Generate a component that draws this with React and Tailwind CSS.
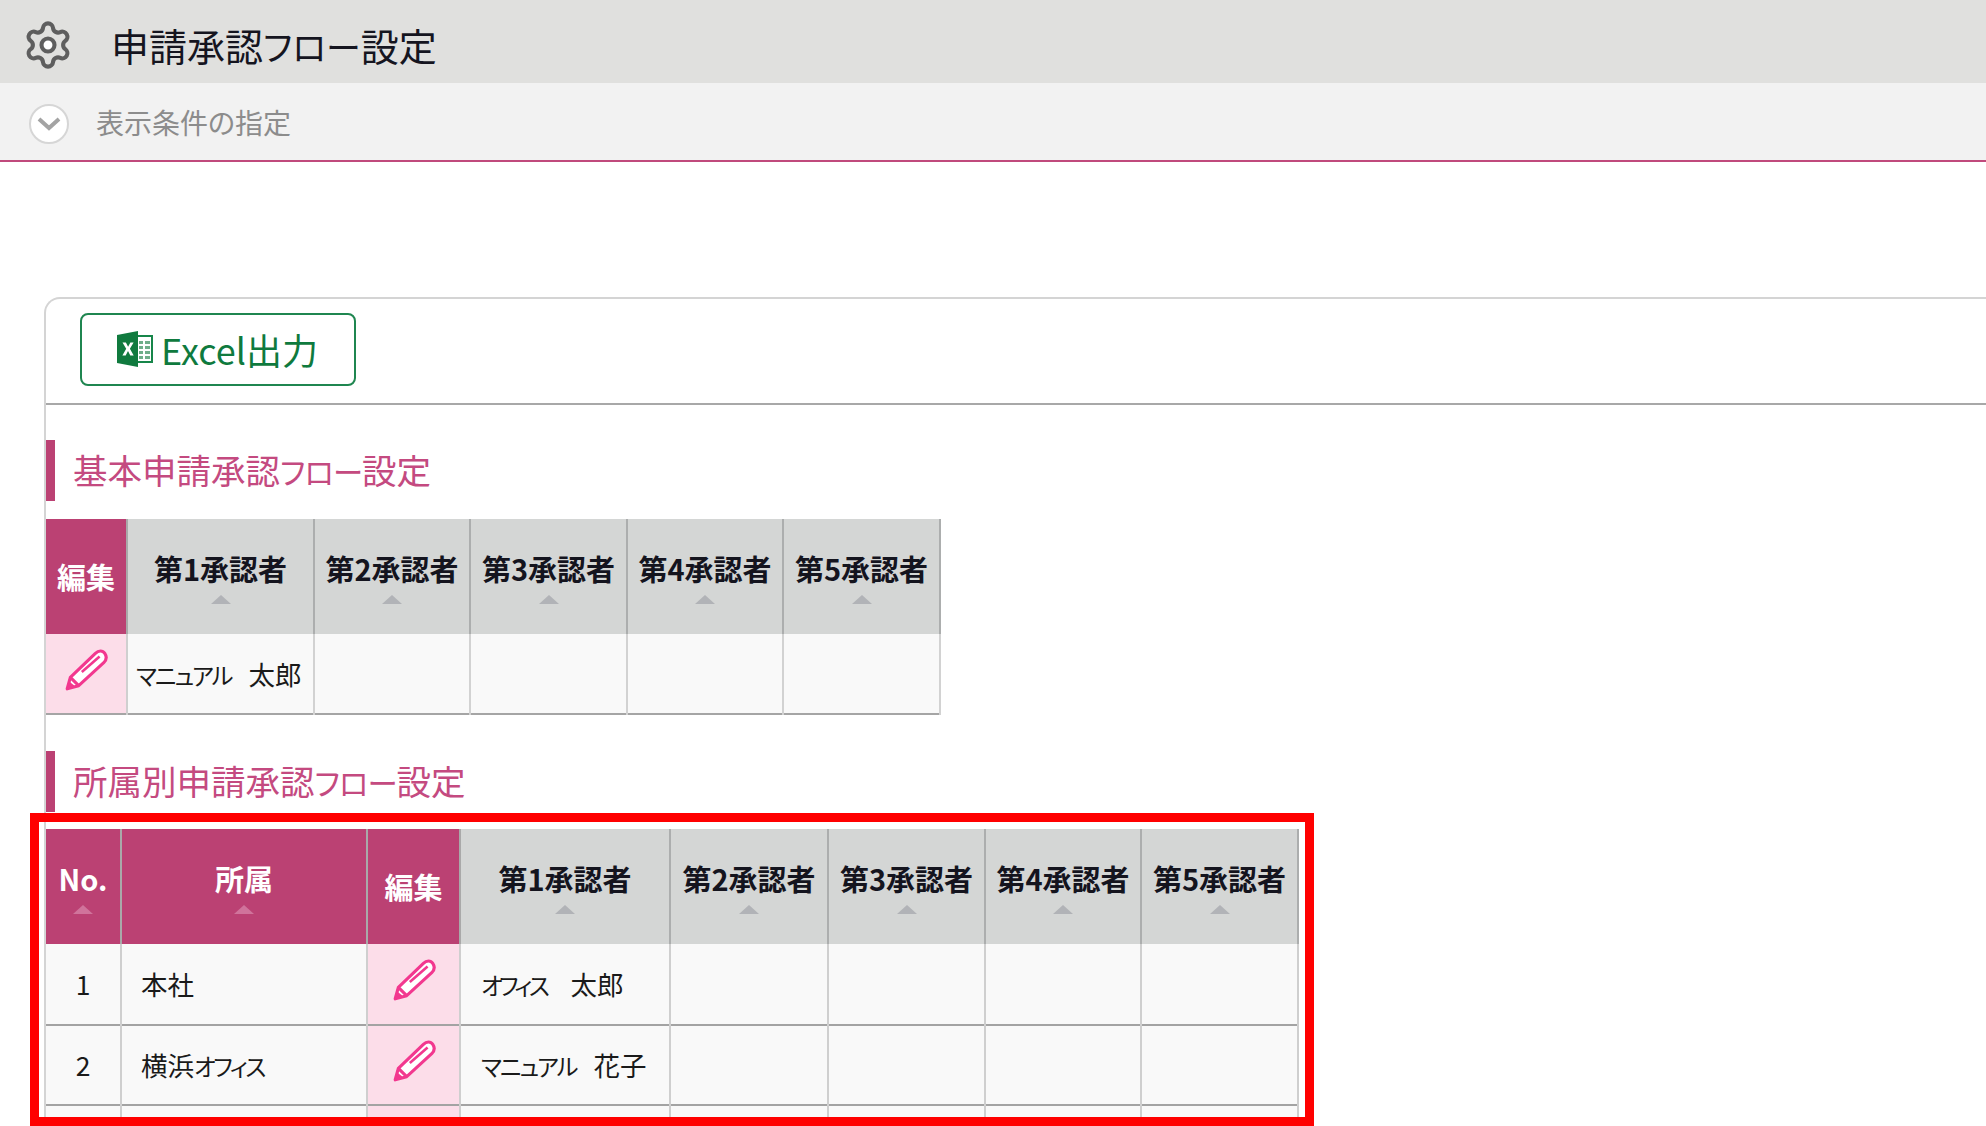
import React from 'react';
import { Settings } from 'lucide-react';

const font = "font-['Noto_Sans_CJK_JP','Liberation_Sans',sans-serif] [font-feature-settings:'palt']";

const approvers = ['第1承認者', '第2承認者', '第3承認者', '第4承認者', '第5承認者'];

// katakana in the original font runs narrower than the kanji
const Kana = ({ children, className = 'tracking-[-0.03em]' }) => (
  <span className={`text-[0.88em] ${className}`}>{children}</span>
);

const SortMark = ({ pink }) => (
  <span
    className={`block w-0 h-0 mt-[9px] border-x-[10px] border-b-[9px] border-x-transparent ${
      pink ? 'border-b-[#d0739b]' : 'border-b-[#b1b3b7]'
    }`}
  />
);

const HeadCell = ({ label, pink, sort = true, width }) => (
  <th
    style={{ width }}
    className={`p-0 border-r-2 align-middle font-bold ${
      pink ? 'bg-[#bb4173] text-white border-r-[#a9a9a9]' : 'bg-[#d4d6d5] text-[#14141e] border-r-[#acaeae]'
    }`}
  >
    <div className={`flex flex-col items-center ${sort ? '' : '-mt-[1px]'}`}>
      <span className="text-[29px] leading-[36px] whitespace-nowrap">{label}</span>
      {sort && <SortMark pink={pink} />}
    </div>
  </th>
);

const PencilIcon = () => (
  <svg width="48" height="46" viewBox="0 0 46 44" fill="none" className="mx-auto">
    <path
      d="M5 40 L8 29 L32 6 C35 3 39 3 41 6 C43 9 43 12 40 15 L16 37 Z"
      fill="#fff"
      stroke="#f2388f"
      strokeWidth="3"
      strokeLinejoin="round"
    />
    <path d="M8 29 L16 37" stroke="#f2388f" strokeWidth="3" />
    <path d="M5 40 L7 33 L12 37 Z" fill="#f2388f" />
    <path d="M19 24 L36 9" stroke="#f2388f" strokeWidth="2.5" />
  </svg>
);

const ExcelIcon = () => (
  <svg width="36" height="36" viewBox="0 0 36 36" className="shrink-0">
    <rect x="19" y="5" width="16" height="26" fill="#fff" stroke="#17864a" strokeWidth="2" />
    <path
      d="M22 10h4v3h-4zM28 10h5v3h-5zM22 15h4v3h-4zM28 15h5v3h-5zM22 20h4v3h-4zM28 20h5v3h-5zM22 25h4v3h-4zM28 25h5v3h-5z"
      fill="#6fae8a"
    />
    <path d="M0 4 L21 0 V36 L0 32 Z" fill="#107a3e" />
    <path d="M5.5 11.5h3.4l2.2 4.2 2.3-4.2h3.2l-3.7 6.3 3.8 6.7h-3.4l-2.3-4.5-2.3 4.5H5.4l3.8-6.7z" fill="#fff" />
  </svg>
);

const SectionTitle = ({ children, className }) => (
  <div className={`h-[61px] border-l-[9px] border-[#bb4173] pl-[18px] pb-[2px] flex items-center ${className}`}>
    <h2 className="text-[#c44a80] text-[34.5px] font-normal leading-none">{children}</h2>
  </div>
);

const BasicTable = () => (
  <table className="table-fixed border-collapse w-[894px]">
    <thead>
      <tr className="h-[115px]">
        <HeadCell label="編集" pink sort={false} width={81} />
        {approvers.map((name, i) => (
          <HeadCell key={name} label={name} width={i === 0 ? 187 : i % 2 ? 156 : 157} />
        ))}
      </tr>
    </thead>
    <tbody>
      <tr className="h-[80px] border-b-2 border-b-[#a5a5a5]">
        <td className="p-0 pb-[8px] bg-[#fcdde9] border-r-2 border-r-[#cfcfcf]">
          <PencilIcon />
        </td>
        <td className="p-0 pl-[8px] bg-[#f9f9f9] border-r-2 border-r-[#d2d2d2] text-[26.5px] whitespace-nowrap text-[#1a1a1a]">
          <Kana className="tracking-[-0.08em]">マニュアル</Kana>
          <span className="ml-[17px]">太郎</span>
        </td>
        {[2, 3, 4, 5].map((n) => (
          <td key={n} className="p-0 bg-[#f9f9f9] border-r-2 border-r-[#d2d2d2]" />
        ))}
      </tr>
    </tbody>
  </table>
);

const deptRows = [
  {
    no: '1',
    dept: '本社',
    kana: '',
    family: 'オフィス',
    familyTrack: 'tracking-[-0.15em]',
    gap: 'ml-[24px]',
    last: '太郎',
    h: 'h-[81px]',
  },
  {
    no: '2',
    dept: '横浜',
    kana: 'オフィス',
    family: 'マニュアル',
    familyTrack: 'tracking-[-0.08em]',
    gap: 'ml-[17px]',
    last: '花子',
    h: 'h-[80px]',
  },
  { no: '', dept: '', kana: '', family: '', familyTrack: '', gap: '', last: '', h: 'h-[80px]' },
];

const DeptTable = () => (
  <table className="table-fixed border-collapse w-[1252px]">
    <thead>
      <tr className="h-[115px]">
        <HeadCell label="No." pink width={75} />
        <HeadCell label="所属" pink width={246} />
        <HeadCell label="編集" pink sort={false} width={93} />
        {approvers.map((name, i) => (
          <HeadCell key={name} label={name} width={[210, 158, 157, 156, 157][i]} />
        ))}
      </tr>
    </thead>
    <tbody>
      {deptRows.map((row, i) => (
        <tr key={i} className={`${row.h} border-b-2 border-b-[#a3a3a3] text-[26.5px] text-[#1a1a1a]`}>
          <td className="p-0 bg-[#f9f9f9] border-r-2 border-r-[#cfcfcf] text-center">{row.no}</td>
          <td className="p-0 pl-[19px] bg-[#f9f9f9] border-r-2 border-r-[#cfcfcf] whitespace-nowrap">
            {row.dept}
            <Kana className="tracking-[-0.1em]">{row.kana}</Kana>
          </td>
          <td className="p-0 pb-[8px] bg-[#fcdde9] border-r-2 border-r-[#cfcfcf]">
            {row.no && <PencilIcon />}
          </td>
          <td className="p-0 pl-[20px] bg-[#f9f9f9] border-r-2 border-r-[#cfcfcf] whitespace-nowrap">
            <Kana className={row.familyTrack}>{row.family}</Kana>
            <span className={row.gap}>{row.last}</span>
          </td>
          {[2, 3, 4, 5].map((n) => (
            <td key={n} className="p-0 bg-[#f9f9f9] border-r-2 border-r-[#cfcfcf]" />
          ))}
        </tr>
      ))}
    </tbody>
  </table>
);

export default function App() {
  return (
    <div className={`relative h-[1126px] overflow-hidden bg-white ${font}`}>
      <header className="h-[83px] bg-[#e0e0de] flex items-center pl-[22px] pt-[6px]">
        <Settings size={52} strokeWidth={1.9} color="#5e5e5e" className="shrink-0 [&>circle]:fill-white" />
        <h1 className="ml-[37px] text-[38px] font-normal text-[#15151f] leading-none">
          申請承認<span className="text-[0.92em]">フロー</span>設定
        </h1>
      </header>

      <div className="h-[79px] bg-[#f2f2f2] border-b-2 border-b-[#c04a7c] flex items-center pl-[29px]">
        <span className="mt-[5px] w-[40px] h-[40px] rounded-full bg-white border-2 border-[#d6d6d6] flex items-center justify-center shrink-0">
          <svg width="26" height="16" viewBox="0 0 26 16" fill="none">
            <path d="M3 3 L13 12 L23 3" stroke="#a3a3a3" strokeWidth="4" />
          </svg>
        </span>
        <span className="ml-[27px] text-[28px] text-[#8c8c8c] leading-none">表示条件の指定</span>
      </div>

      <main className="mt-[135px] ml-[44px] border-l-2 border-t-2 border-[#d4d4d4] rounded-tl-[16px]">
        <div className="h-[106px] border-b-2 border-b-[#a8a8a8] pt-[14px] pl-[34px]">
          <button className="w-[276px] h-[73px] border-2 border-[#1f8650] rounded-[8px] bg-white flex items-center pl-[35px] pb-[2px] gap-[8px] text-[#0f7a3e] text-[36px] leading-none">
            <ExcelIcon />
            Excel出力
          </button>
        </div>

        <SectionTitle className="mt-[35px] mb-[18px]">
          基本申請承認<Kana>フロー</Kana>設定
        </SectionTitle>
        <BasicTable />

        <SectionTitle className="mt-[36px] mb-[17px]">
          所属別申請承認<Kana>フロー</Kana>設定
        </SectionTitle>
        <DeptTable />
      </main>

      {/* red annotation box drawn over the screenshot */}
      <div className="absolute left-[30px] top-[813px] w-[1284px] h-[313px] border-[9px] border-[#ff0000] pointer-events-none" />
    </div>
  );
}
